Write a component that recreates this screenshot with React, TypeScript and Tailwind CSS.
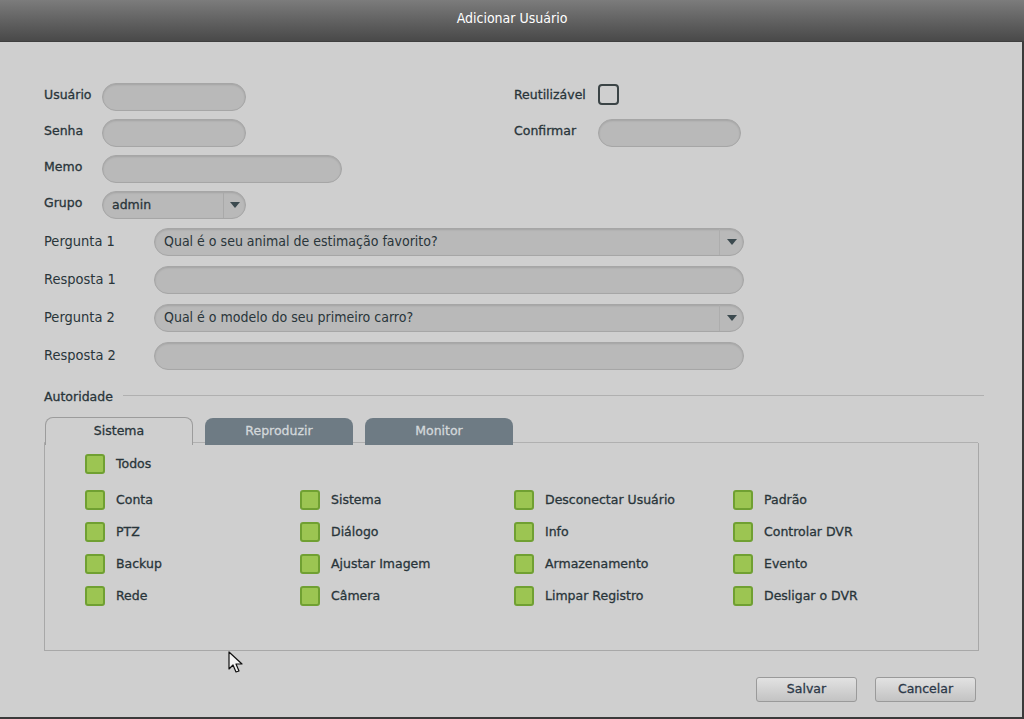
import React from "react";

const sans = { fontFamily: '"DejaVu Sans", Verdana, sans-serif' };
const cond = { fontFamily: '"DejaVu Sans Condensed", "DejaVu Sans", sans-serif' };

function Field({ w, children }: { w: string; children?: React.ReactNode }) {
  return (
    <div
      className={`${w} h-[28px] rounded-full bg-[#b9b9b9] border border-[#a6a6a6] shadow-[inset_0_1px_2px_rgba(0,0,0,0.12)] flex items-center`}
    >
      {children}
    </div>
  );
}

function Arrow() {
  return (
    <svg width="10" height="6" viewBox="0 0 10 6">
      <path d="M0 0 H10 L5 6 Z" fill="#3c4a4f" />
    </svg>
  );
}

function Check({ label, w }: { label: string; w?: string }) {
  return (
    <div className={`flex items-center h-[20px] ${w ?? ""}`}>
      <div className="w-[20px] h-[20px] rounded-[3px] bg-[#9cc552] border-2 border-[#70a032] shrink-0" />
      <span className="ml-[11px] text-[12.5px] text-[#29353a] [-webkit-text-stroke:0.3px_#29353a]" style={sans}>
        {label}
      </span>
    </div>
  );
}

const lbl = "text-[12.5px] text-[#29353a] [-webkit-text-stroke:0.3px_#29353a] -mt-[3px]";

export default function App() {
  const cols = [
    ["Conta", "PTZ", "Backup", "Rede"],
    ["Sistema", "Diálogo", "Ajustar Imagem", "Câmera"],
    ["Desconectar Usuário", "Info", "Armazenamento", "Limpar Registro"],
    ["Padrão", "Controlar DVR", "Evento", "Desligar o DVR"],
  ];
  const colW = ["w-[215px]", "w-[214px]", "w-[219px]", "w-[200px]"];
  return (
    <div className="w-[1024px] h-[719px] relative overflow-hidden bg-[#cfcfcf] flex flex-col">
      {/* title bar */}
      <div className="h-[42px] shrink-0 bg-gradient-to-b from-[#7c7c7c] to-[#494949] flex items-center justify-center border-b border-[#3f3f3f]">
        <span className="text-white text-[14px] -mt-[4px]" style={cond}>
          Adicionar Usuário
        </span>
      </div>

      <div className="flex-1 flex flex-col pl-[44px] pr-[40px] text-[#29353a]">
        {/* top section */}
        <div className="flex mt-[41px]">
          <div className="w-[470px] flex flex-col gap-[8px]">
            {[
              { l: "Usuário", w: "w-[144px]" },
              { l: "Senha", w: "w-[144px]" },
              { l: "Memo", w: "w-[240px]" },
            ].map((r) => (
              <div key={r.l} className="flex items-center h-[28px]">
                <span className={`w-[58px] ${lbl}`} style={sans}>
                  {r.l}
                </span>
                <Field w={r.w} />
              </div>
            ))}
            <div className="flex items-center h-[28px]">
              <span className={`w-[58px] ${lbl}`} style={sans}>
                Grupo
              </span>
              <Field w="w-[144px]">
                <span className="ml-[9px] text-[12.5px] flex-1 [-webkit-text-stroke:0.3px_#29353a]" style={sans}>
                  admin
                </span>
                <div className="h-full w-[22px] border-l border-[#a9a9a9] flex items-center justify-center">
                  <Arrow />
                </div>
              </Field>
            </div>
          </div>
          <div className="flex flex-col gap-[8px]">
            <div className="flex items-center h-[28px]">
              <span className={`w-[84px] ${lbl}`} style={sans}>
                Reutilizável
              </span>
              <div className="w-[21px] h-[21px] rounded-[4px] border-2 border-[#3b4446] -mt-[5px]" />
            </div>
            <div className="flex items-center h-[28px]">
              <span className={`w-[84px] ${lbl}`} style={sans}>
                Confirmar
              </span>
              <Field w="w-[143px]" />
            </div>
          </div>
        </div>

        {/* questions */}
        <div className="flex flex-col gap-[10px] mt-[9px]">
          {[
            { l: "Pergunta 1", t: "Qual é o seu animal de estimação favorito?" },
            { l: "Resposta 1" },
            { l: "Pergunta 2", t: "Qual é o modelo do seu primeiro carro?" },
            { l: "Resposta 2" },
          ].map((r) => (
            <div key={r.l} className="flex items-center h-[28px]">
              <span className="w-[110px] text-[14.5px] -mt-[1px]" style={cond}>
                {r.l}
              </span>
              <Field w="w-[590px]">
                {r.t && (
                  <>
                    <span className="ml-[9px] flex-1 text-[14px] -mt-[2px]" style={cond}>
                      {r.t}
                    </span>
                    <div className="h-full w-[24px] border-l border-[#adadad] flex items-center justify-center">
                      <Arrow />
                    </div>
                  </>
                )}
              </Field>
            </div>
          ))}
        </div>

        {/* Autoridade */}
        <div className="flex items-center mt-[18px] h-[18px]">
          <span className="text-[12.5px] text-[#29353a] [-webkit-text-stroke:0.3px_#29353a]" style={sans}>
            Autoridade
          </span>
          <div className="flex-1 ml-[10px] h-px bg-[#b0b0b0] -mt-[4px]" />
        </div>

        {/* tabs */}
        <div className="flex items-end mt-[11px] h-[28px] relative">
          <div className="absolute left-0 right-[6px] bottom-[2px] h-px bg-[#b0b0b0]" />
          <div
            className="relative z-10 w-[148px] h-[28px] rounded-t-[8px] border border-b-0 border-[#9c9c9c] bg-[#cfcfcf] flex items-center justify-center text-[12.5px] text-[#29353a] [-webkit-text-stroke:0.3px_#29353a] ml-[1px]"
            style={sans}
          >
            Sistema
          </div>
          <div
            className="relative z-10 w-[148px] h-[27px] rounded-t-[8px] bg-[#6e7b84] ml-[12px] flex items-center justify-center text-[12.5px] text-[#d3d8db] [-webkit-text-stroke:0.3px_#d3d8db]"
            style={sans}
          >
            Reproduzir
          </div>
          <div
            className="relative z-10 w-[148px] h-[27px] rounded-t-[8px] bg-[#6e7b84] ml-[12px] flex items-center justify-center text-[12.5px] text-[#d3d8db] [-webkit-text-stroke:0.3px_#d3d8db]"
            style={sans}
          >
            Monitor
          </div>
        </div>

        {/* panel */}
        <div className="w-[935px] h-[208px] border border-t-0 border-[#a8a8a8] -mt-[2px] pl-[40px] pt-[11px]">
          <Check label="Todos" />
          <div className="flex mt-[16px]">
            {cols.map((c, i) => (
              <div key={i} className={`flex flex-col gap-[12px] ${colW[i]}`}>
                {c.map((l) => (
                  <Check key={l} label={l} />
                ))}
              </div>
            ))}
          </div>
        </div>

        {/* buttons */}
        <div className="flex justify-end gap-[18px] mt-[26px] pr-[8px]">
          {["Salvar", "Cancelar"].map((b) => (
            <div
              key={b}
              className="w-[101px] h-[25px] rounded-[3px] border border-[#9a9a9a] bg-gradient-to-b from-[#e2e2e2] to-[#c3c3c3] flex items-center justify-center text-[12.5px] text-[#2c3848] [-webkit-text-stroke:0.3px_#2c3848]"
              style={sans}
            >
              {b}
            </div>
          ))}
        </div>
      </div>

      {/* right and bottom dark edges */}
      <div className="absolute right-0 top-[42px] bottom-0 w-[2px] bg-[#3a3a3a]" />
      <div className="absolute left-0 right-0 bottom-0 h-[2px] bg-[#3a3a3a]" />

      {/* mouse cursor */}
      <svg className="absolute left-[228px] top-[651px]" width="16" height="24" viewBox="0 0 16 24">
        <path d="M1 1 L1 18 L5 14 L8 21 L11 20 L8 13 L14 13 Z" fill="#f4f4f4" stroke="#111" strokeWidth="1.2" strokeLinejoin="round" />
      </svg>
    </div>
  );
}
